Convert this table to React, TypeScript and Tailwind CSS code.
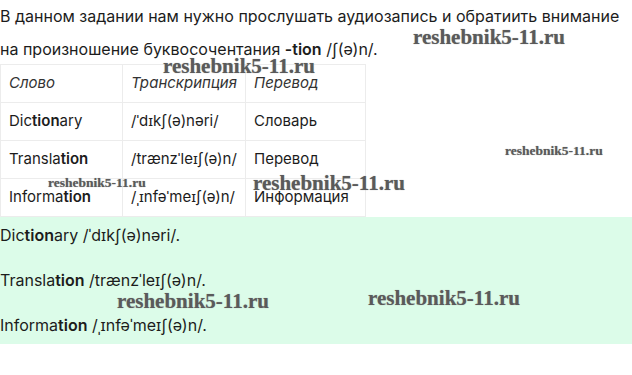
import React from 'react'

const wm = "absolute font-bold text-[#5a5a5a] [font-family:'Liberation_Serif',serif] whitespace-nowrap leading-none [text-shadow:0_0_1px_#9a9a9a]"

function B({ children }: { children: React.ReactNode }) {
  return <b className="font-semibold">{children}</b>
}

const rows = [
  { w: ['Dic', 'tion', 'ary'], t: '/ˈdɪkʃ(ə)nəri/', p: 'Словарь' },
  { w: ['Transla', 'tion', ''], t: '/trænzˈleɪʃ(ə)n/', p: 'Перевод' },
  { w: ['Informa', 'tion', ''], t: '/ˌɪnfəˈmeɪʃ(ə)n/', p: 'Информация' }
]

const cell = 'border border-[#ececec] px-2 text-left'

export default function App() {
  return (
    <div className="relative w-[632px] h-[375px] bg-white overflow-hidden text-[#1c1c1c] [font-family:Inter,'Noto_Sans',sans-serif]">
      <p className="text-[16px] leading-[33px]">
        В данном задании нам нужно прослушать аудиозапись и обратиить внимание на произношение буквосочентания <B>-tion</B> /ʃ(ə)n/.
      </p>

      <table className="mt-[-2px] border-collapse text-[15px] w-[366px]">
        <thead>
          <tr className="h-[38px]">
            <th className={cell + ' w-[122px] font-normal italic text-[#333]'}>Слово</th>
            <th className={cell + ' w-[122px] font-normal italic text-[#333]'}>Транскрипция</th>
            <th className={cell + ' font-normal italic text-[#333]'}>Перевод</th>
          </tr>
        </thead>
        <tbody>
          {rows.map((r) => (
            <tr key={r.p} className="h-[38px]">
              <td className={cell}>
                {r.w[0]}<B>{r.w[1]}</B>{r.w[2]}
              </td>
              <td className={cell + ' whitespace-nowrap'}>{r.t}</td>
              <td className={cell}>{r.p}</td>
            </tr>
          ))}
        </tbody>
      </table>

      <div className="bg-[#dcfce9] py-[7px] text-[16px] leading-[22.5px]">
        Dic<B>tion</B>ary /ˈdɪkʃ(ə)nəri/.
        <br />
        <br />
        Transla<B>tion</B> /trænzˈleɪʃ(ə)n/.
        <br />
        <br />
        Informa<B>tion</B> /ˌɪnfəˈmeɪʃ(ə)n/.
      </div>

      <span className={wm + ' left-[413px] top-[27px] text-[21px]'}>reshebnik5-11.ru</span>
      <span className={wm + ' left-[163px] top-[56px] text-[21px]'}>reshebnik5-11.ru</span>
      <span className={wm + ' left-[505px] top-[144px] text-[13.5px]'}>reshebnik5-11.ru</span>
      <span className={wm + ' left-[48px] top-[176px] text-[13.5px]'}>reshebnik5-11.ru</span>
      <span className={wm + ' left-[253px] top-[173px] text-[21px]'}>reshebnik5-11.ru</span>
      <span className={wm + ' left-[117px] top-[291px] text-[21px]'}>reshebnik5-11.ru</span>
      <span className={wm + ' left-[368px] top-[288px] text-[21px]'}>reshebnik5-11.ru</span>
    </div>
  )
}
